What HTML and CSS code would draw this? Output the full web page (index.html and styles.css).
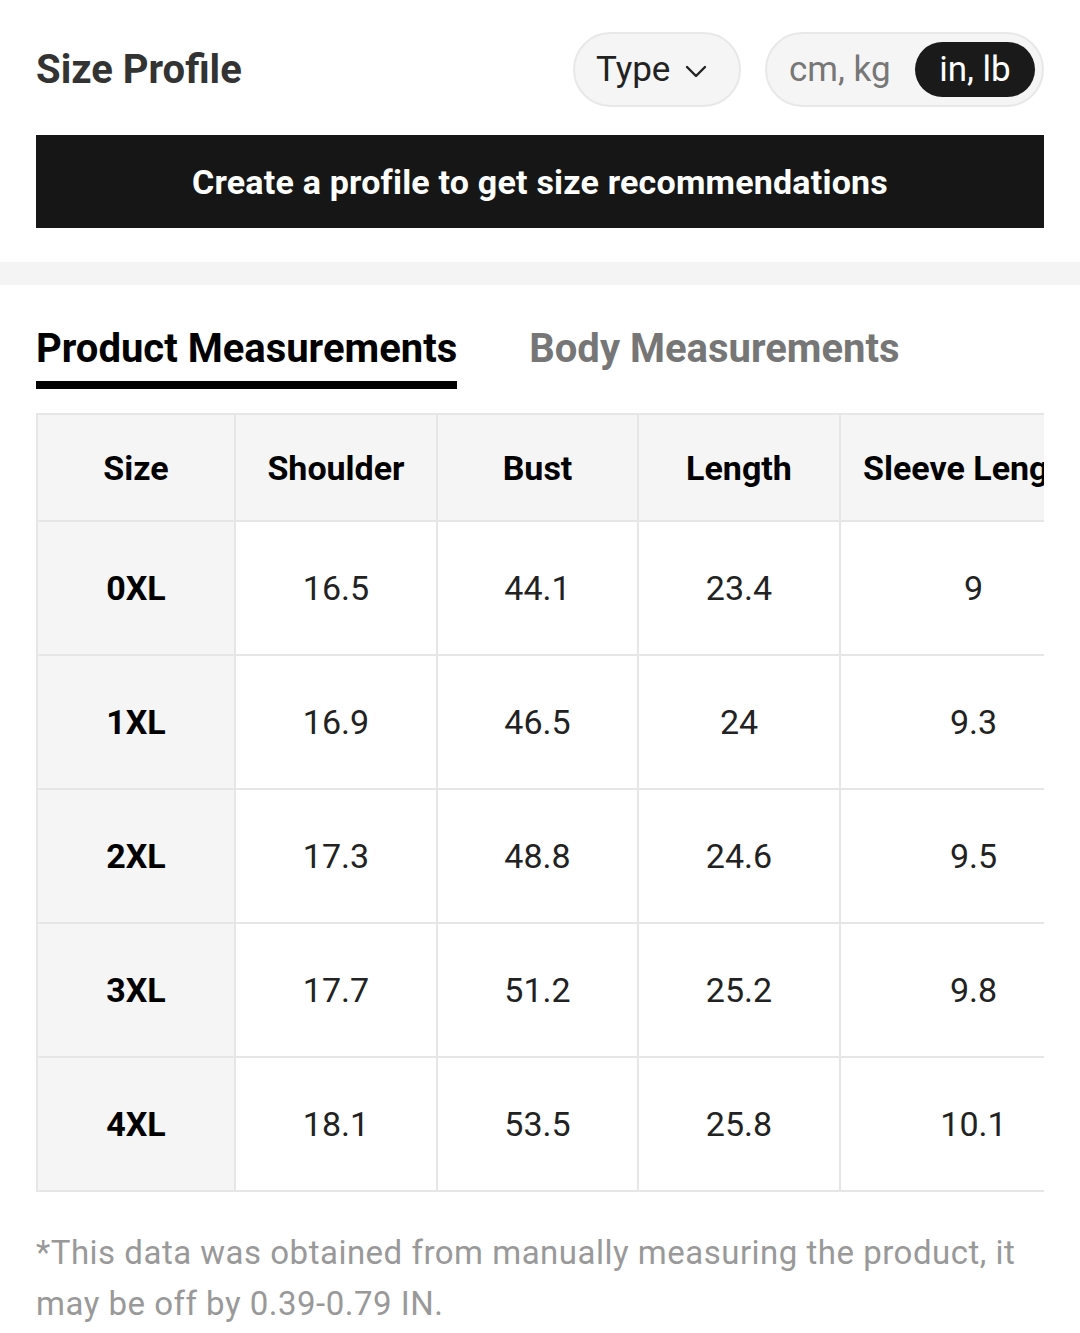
FILE: index.html
```html
<!DOCTYPE html>
<html lang="en">
<head>
<meta charset="utf-8">
<title>Size Profile</title>
<link rel="stylesheet" href="styles.css">
</head>
<body>
<div class="page">
  <section class="profile">
    <div class="profile-head">
      <h1 class="profile-title">Size Profile</h1>
      <div class="controls">
        <button class="pill type-pill">Type
          <svg class="chev" width="22" height="14" viewBox="0 0 22 14"><path d="M2 2 L11 11 L20 2" fill="none" stroke="#222" stroke-width="2.4" stroke-linecap="round" stroke-linejoin="round"/></svg>
        </button>
        <div class="pill unit-toggle">
          <span class="unit">cm, kg</span>
          <span class="unit active">in, lb</span>
        </div>
      </div>
    </div>
    <div class="cta">Create a profile to get size recommendations</div>
  </section>
  <div class="divider"></div>
  <section class="measure">
    <div class="tabs">
      <div class="tab active">Product Measurements</div>
      <div class="tab">Body Measurements</div>
    </div>
    <div class="table-wrap">
      <table class="size-table">
        <colgroup>
          <col class="c1"><col class="c2"><col class="c3"><col class="c4"><col class="c5">
        </colgroup>
        <thead>
          <tr><th>Size</th><th>Shoulder</th><th>Bust</th><th>Length</th><th class="last">Sleeve Length</th></tr>
        </thead>
        <tbody>
          <tr><th>0XL</th><td>16.5</td><td>44.1</td><td>23.4</td><td>9</td></tr>
          <tr><th>1XL</th><td>16.9</td><td>46.5</td><td>24</td><td>9.3</td></tr>
          <tr><th>2XL</th><td>17.3</td><td>48.8</td><td>24.6</td><td>9.5</td></tr>
          <tr><th>3XL</th><td>17.7</td><td>51.2</td><td>25.2</td><td>9.8</td></tr>
          <tr><th>4XL</th><td>18.1</td><td>53.5</td><td>25.8</td><td>10.1</td></tr>
        </tbody>
      </table>
    </div>
    <p class="note">*This data was obtained from manually measuring the product, it may be off by 0.39-0.79 IN.</p>
  </section>
</div>
</body>
</html>
```

FILE: styles.css
```css
* { box-sizing: border-box; }
html, body { margin: 0; padding: 0; background: #fff; }
body { font-family: Roboto, "Liberation Sans", Arial, sans-serif; color: #222; }
.page { width: 1080px; }

.profile { padding: 32px 36px 34px; }
.profile-head { display: flex; align-items: center; justify-content: space-between; height: 75px; }
.profile-title { margin: 0; font-size: 40px; font-weight: 700; color: #333; line-height: 1; }
.controls { display: flex; gap: 24px; align-items: center; }
.pill {
  height: 75px; border: 2px solid #e8e8e8; background: #f5f5f5; border-radius: 38px;
  font-family: inherit; display: flex; align-items: center;
}
.type-pill { width: 168px; padding: 0 0 0 21px; font-size: 35px; color: #222; gap: 15px; }
.chev { margin-top: 4px; }
.unit-toggle { width: 279px; padding: 0 7px 0 22px; justify-content: space-between; }
.unit { font-size: 35px; color: #777; line-height: 55px; }
.unit.active { background: #1a1a1a; color: #fff; border-radius: 28px; width: 120px; height: 55px; text-align: center; }

.cta {
  margin-top: 28px; height: 93px; background: #161616; color: #fff;
  display: flex; align-items: center; justify-content: center;
  font-size: 34px; font-weight: 700; letter-spacing: 0.2px;
}
.divider { height: 23px; background: #f4f4f4; }

.measure { padding: 40px 36px 0; }
.tabs { display: flex; gap: 72px; }
.tab { font-size: 40px; font-weight: 700; line-height: 48px; color: #767676; padding-bottom: 8px; border-bottom: 8px solid transparent; }
.tab.active { color: #000; border-bottom-color: #000; }

.table-wrap { margin-top: 24px; width: 1008px; overflow: hidden; }
.size-table { border-collapse: collapse; table-layout: fixed; width: 1070px; }
.c1 { width: 198px; } .c2 { width: 202px; } .c3 { width: 201px; } .c4 { width: 202px; } .c5 { width: 267px; }
.size-table th, .size-table td {
  border: 2px solid #e6e6e6; text-align: center; vertical-align: middle; font-size: 34px; padding: 0;
  white-space: nowrap;
}
.size-table thead th { height: 107px; background: #f5f5f5; font-weight: 700; color: #000; }
.size-table tbody tr { height: 134px; }
.size-table tbody th { background: #f5f5f5; font-weight: 700; color: #000; }
.size-table td { color: #222; font-weight: 400; }
.size-table thead th.last { text-align: left; padding-left: 22px; }

.note { margin: 35px 0 0; font-size: 33px; line-height: 51px; letter-spacing: 0.5px; color: #999; }
```
